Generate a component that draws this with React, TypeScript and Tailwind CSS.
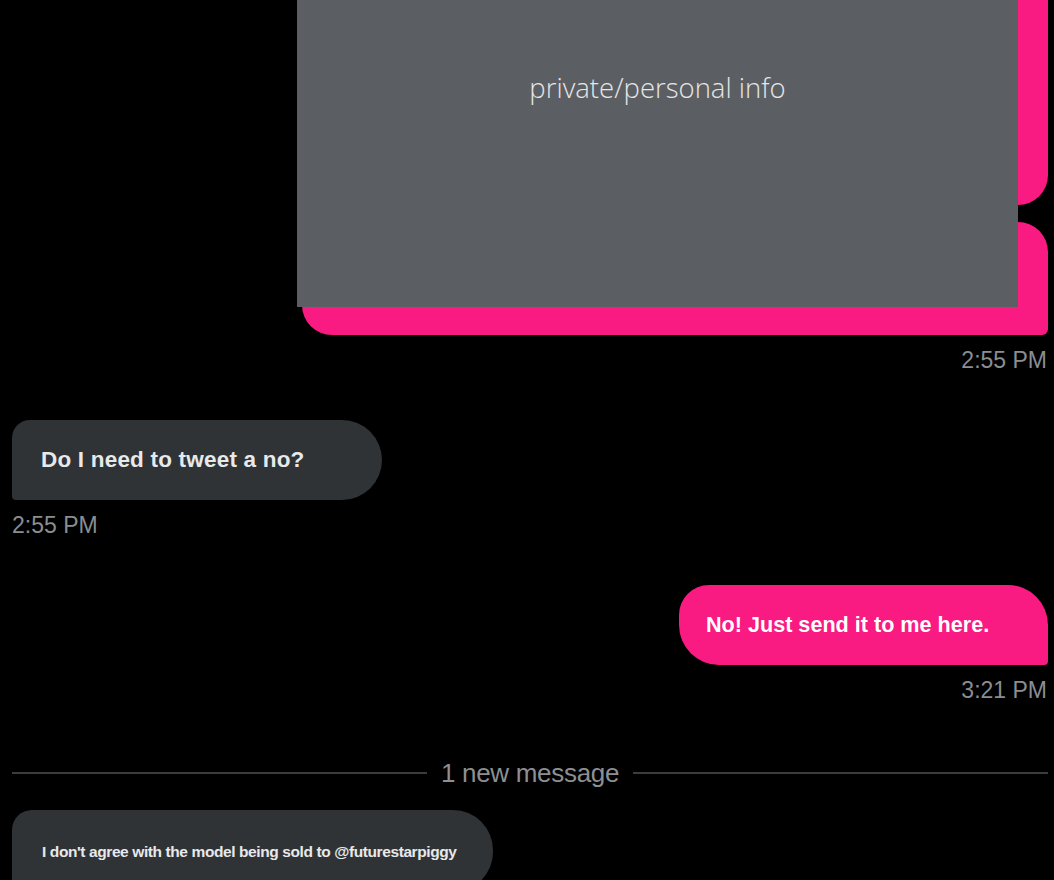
import React from 'react';

const font = { fontFamily: '"Liberation Sans", Arial, sans-serif' };

function Stamp({ time, align }: { time: string; align: 'left' | 'right' }) {
  return (
    <div
      className={`text-[23px] leading-[24px] text-[#8a8d91] ${align === 'right' ? 'self-end pr-[1px]' : 'self-start'}`}
    >
      {time}
    </div>
  );
}

export default function App() {
  return (
    <div className="relative h-[880px] w-[1054px] overflow-hidden bg-black" style={font}>
      {/* redaction box over the attached image */}
      <div className="absolute left-[297px] top-0 z-10 flex h-[307px] w-[721px] justify-center bg-[#5b5f63] pt-[72px]">
        <span
          className="text-[27.5px] font-light leading-[32px] text-[#e6e6e6]"
          style={{ fontFamily: '"Open Sans", "Noto Sans", sans-serif' }}
        >
          private/personal info
        </span>
      </div>

      <div className="flex flex-col pl-[12px] pr-[6px]">
        {/* sent media bubbles */}
        <div className="ml-auto h-[205px] w-[746px] rounded-b-[30px] bg-[#f91a82]" />
        <div className="ml-auto mt-[17px] h-[113px] w-[746px] rounded-t-[30px] rounded-bl-[30px] rounded-br-[6px] bg-[#f91a82]" />
        <div className="mt-[13px] flex flex-col">
          <Stamp time="2:55 PM" align="right" />
        </div>

        {/* received */}
        <div className="mt-[48px] flex h-[80px] w-[370px] items-center rounded-[40px] rounded-tl-[18px] rounded-bl-[4px] bg-[#2f3336] pl-[29px]">
          <span className="text-[22.5px] font-bold tracking-[0.2px] text-[#e7e9ea]">Do I need to tweet a no?</span>
        </div>
        <div className="mt-[13px] flex flex-col">
          <Stamp time="2:55 PM" align="left" />
        </div>

        {/* sent */}
        <div className="ml-auto mt-[48px] flex h-[80px] w-[369px] items-center rounded-[40px] rounded-tl-[30px] rounded-br-[4px] bg-[#f91a82] pl-[27px]">
          <span className="text-[21.6px] font-bold text-white">No! Just send it to me here.</span>
        </div>
        <div className="mt-[13px] flex flex-col">
          <Stamp time="3:21 PM" align="right" />
        </div>

        {/* divider */}
        <div className="mt-[56px] flex items-center gap-[14px]">
          <div className="h-[2px] flex-1 bg-[#3a3d40]" />
          <span className="text-[26px] leading-[30px] tracking-[-0.3px] text-[#8d8f92]">1 new message</span>
          <div className="h-[2px] flex-1 bg-[#3a3d40]" />
        </div>

        <div className="mt-[22px] flex h-[82px] w-[481px] items-start rounded-[40px] rounded-tl-[20px] rounded-bl-[4px] bg-[#2f3336] pl-[30px] pt-[30px]">
          <span className="text-[15.5px] font-bold tracking-[-0.4px] text-[#e7e9ea]">
            I don't agree with the model being sold to @futurestarpiggy
          </span>
        </div>
      </div>
    </div>
  );
}
